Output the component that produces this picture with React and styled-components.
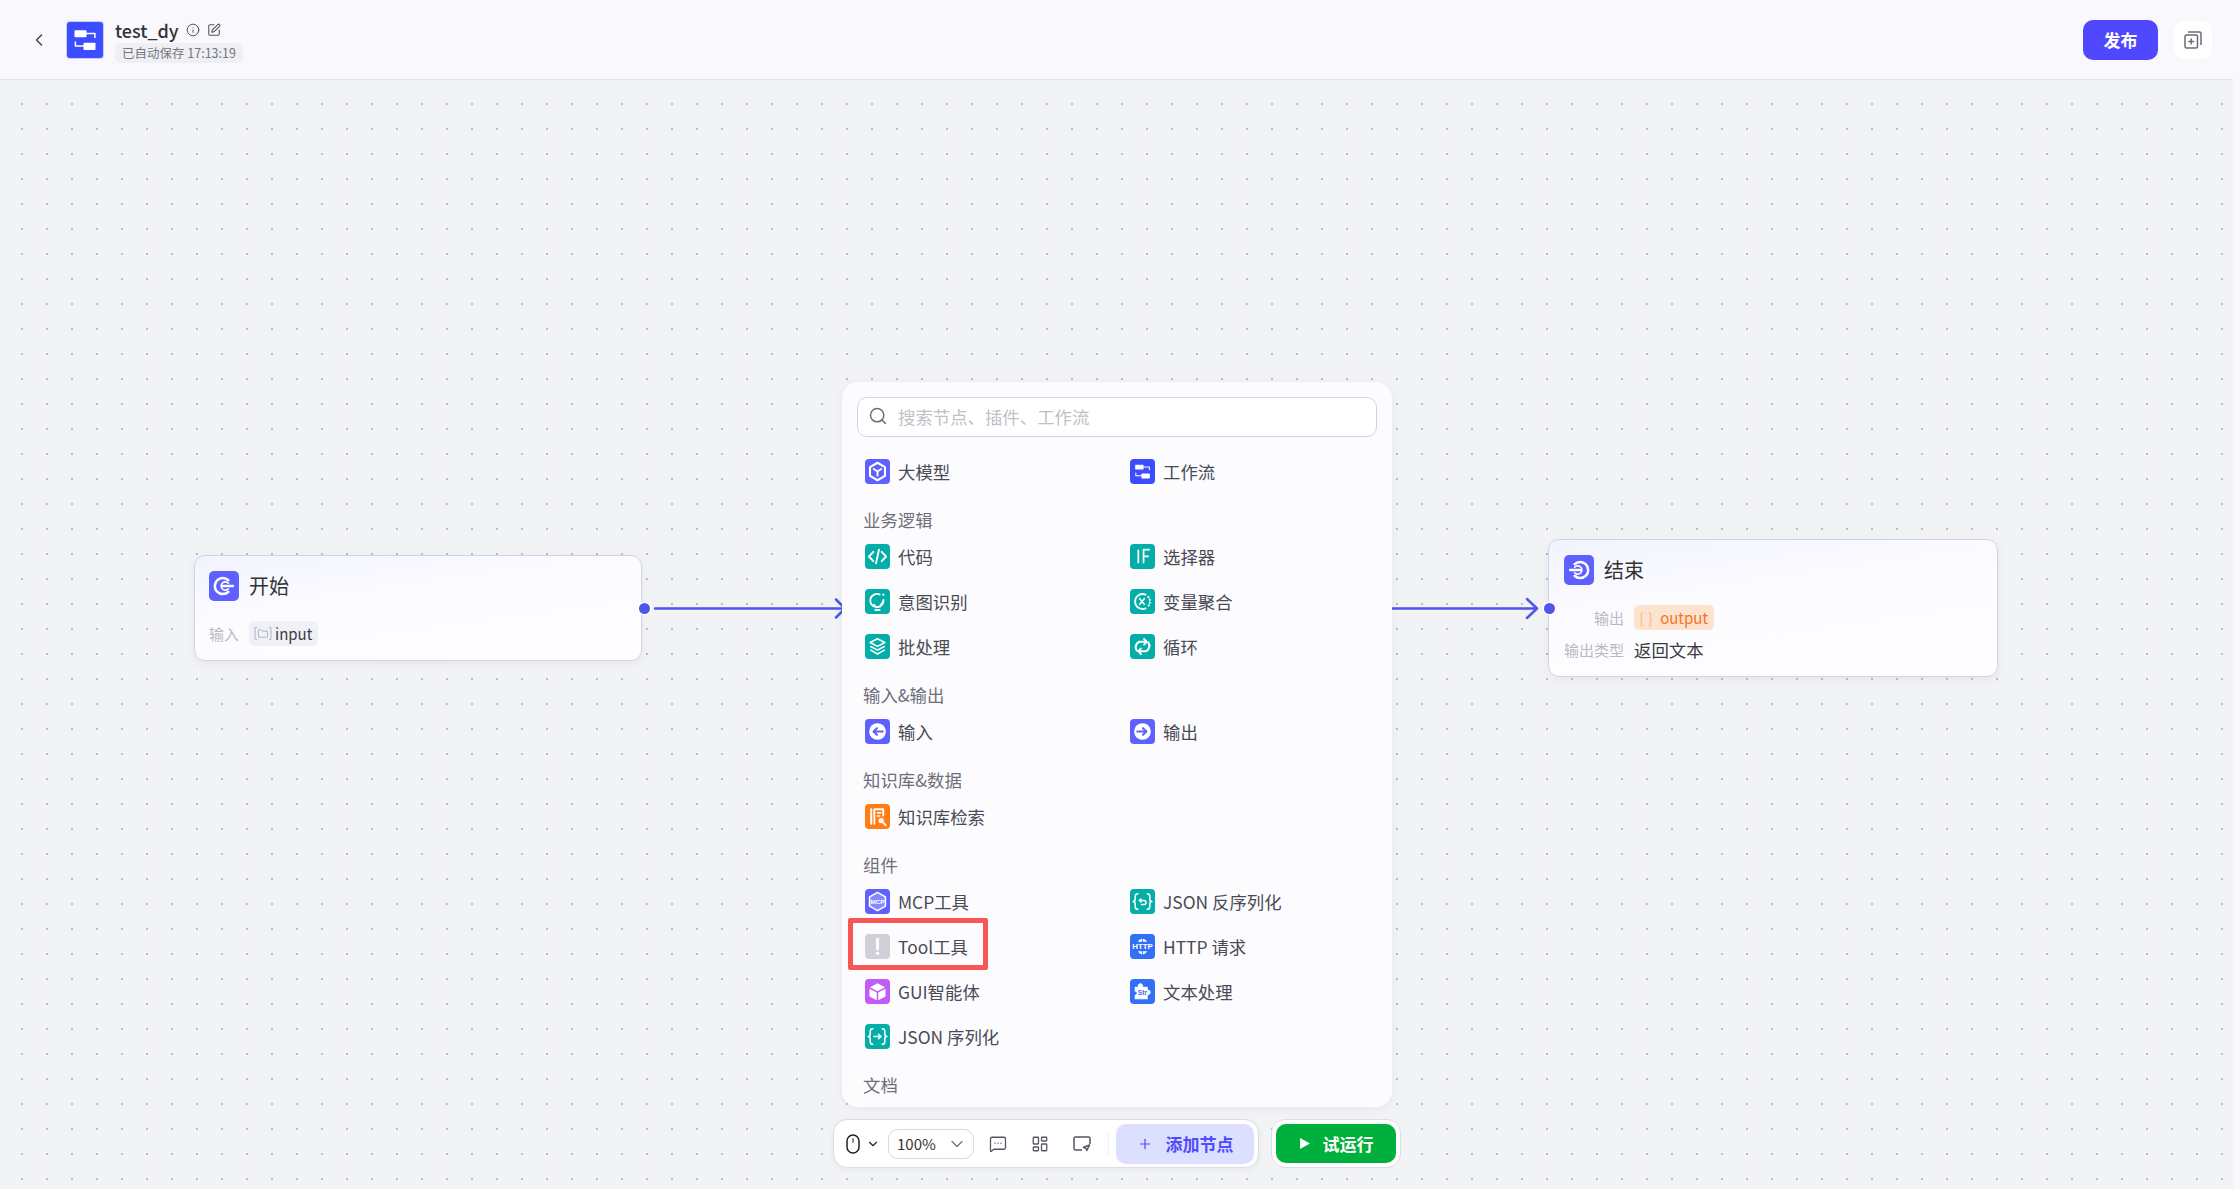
import React from 'react';
import styled, { createGlobalStyle } from 'styled-components';
import { ChevronLeft, ChevronDown, Info, SquarePen, Search, Plus, LayoutDashboard, MessageSquareMore } from 'lucide-react';

const GlobalStyle = createGlobalStyle`
    html, body {
        margin: 0;
        padding: 0;
        background: #f8f8fe;
        font-family: "Noto Sans CJK SC", "Noto Sans", sans-serif;
        color: #333;
    }
    * {
        box-sizing: border-box;
    }
`;

const Page = styled.div`
    display: flex;
    width: 2240px;
    height: 1189px;
    overflow: hidden;
`;

const Main = styled.div`
    display: flex;
    flex-direction: column;
    width: 2233px;
    height: 100%;
`;

const Header = styled.header`
    display: flex;
    align-items: center;
    flex: none;
    height: 80px;
    padding: 0 21px 0 29px;
    background: #f8f8fd;
    border-bottom: 1px solid #e3e3ec;
`;

const BackButton = styled.div`
    display: flex;
    align-items: center;
    justify-content: center;
    width: 20px;
    margin-right: 18px;
    color: #444;
`;

const LogoTile = styled.div`
    display: flex;
    width: 36px;
    height: 36px;
    margin-right: 12px;
    border-radius: 3px;
    background: #3c4dff;
    box-shadow: 0 0 0 1px #c9cdfb;
`;

const TitleBlock = styled.div`
    display: flex;
    flex-direction: column;
    gap: 1px;
    padding-top: 1px;
`;

const TitleRow = styled.div`
    display: flex;
    align-items: center;
    gap: 7px;
    height: 24px;
    color: #555;
`;

const FlowName = styled.span`
    font-size: 18px;
    font-weight: 500;
    line-height: 24px;
    color: #333;
`;

const SavedTag = styled.span`
    padding: 0 7px;
    height: 20px;
    font-size: 12.5px;
    line-height: 20px;
    color: #777;
    background: #efeff6;
    border-radius: 6px;
`;

const HeaderActions = styled.div`
    display: flex;
    align-items: center;
    gap: 16px;
    margin-left: auto;
`;

const PublishButton = styled.div`
    width: 75px;
    height: 40px;
    font-size: 17px;
    font-weight: 700;
    line-height: 40px;
    text-align: center;
    color: #fff;
    background: #4f48ff;
    border-radius: 10px;
`;

const SquareButton = styled.div`
    display: flex;
    align-items: center;
    justify-content: center;
    width: 38px;
    height: 38px;
    background: #fff;
    border-radius: 10px;
`;

const Canvas = styled.main`
    position: relative;
    flex: 1;
    overflow: hidden;
    background-color: #f2f3f5;
    background-image: radial-gradient(circle at 1px 1px, #a9aab0 0.6px, transparent 1px);
    background-size: 25px 25px;
    background-position: 21px 23px;
`;

const Edges = styled.svg`
    position: absolute;
    left: 0;
    top: 0;
    width: 2233px;
    height: 1109px;
`;

const FlowNode = styled.section`
    position: absolute;
    left: ${(p) => p.$left}px;
    top: ${(p) => p.$top}px;
    width: ${(p) => p.$width}px;
    padding: 15px ${(p) => p.$inset}px 14px;
    background: linear-gradient(172deg, #f3f3ff 0%, #fcfcff 45%, #fefdff 100%);
    border: 1px solid #d3d3e6;
    border-radius: 11px;
    box-shadow: 0 3px 10px rgba(40, 40, 80, 0.06);
`;

const NodeHeader = styled.div`
    display: flex;
    align-items: center;
    gap: 10px;
    height: 30px;
    margin-bottom: 20px;
`;

const NodeTitle = styled.span`
    font-size: 20px;
    line-height: 30px;
    color: #333;
`;

const FieldRow = styled.div`
    display: flex;
    align-items: center;
    gap: 10px;
    min-height: 25px;
    margin-top: ${(p) => p.$gap || 0}px;
`;

const FieldLabel = styled.span`
    flex: none;
    width: ${(p) => p.$width}px;
    font-size: 15px;
    line-height: 24px;
    text-align: right;
    color: #b9b9c6;
`;

const FieldValue = styled.span`
    font-size: 17.4px;
    line-height: 24px;
    color: #3a3a42;
`;

const VarChip = styled.span`
    display: flex;
    align-items: center;
    gap: 3px;
    height: 25px;
    padding: 0 6px 0 5px;
    font-size: 15px;
    color: ${(p) => (p.$accent ? '#ff6f1e' : '#3a3a42')};
    background: ${(p) => (p.$accent ? '#fbe3d0' : '#f0f1f7')};
    border-radius: 5px;
`;

const Braces = styled.span`
    font-size: 15px;
    letter-spacing: 4px;
    color: #fcbb85;
`;

const Handle = styled.span`
    position: absolute;
    left: ${(p) => p.$left}px;
    top: ${(p) => p.$top}px;
    width: 11px;
    height: 11px;
    background: #4f56e8;
    border-radius: 50%;
    box-shadow: 0 0 0 1.5px #fff;
`;

const Panel = styled.div`
    position: absolute;
    left: 842px;
    top: 302px;
    width: 550px;
    height: 725px;
    padding: 15px 15px 0;
    overflow: hidden;
    background: #fcfcff;
    border-radius: 16px;
    box-shadow: 0 2px 10px rgba(40, 40, 80, 0.05);
`;

const SearchBox = styled.div`
    display: flex;
    align-items: center;
    gap: 10px;
    height: 40px;
    margin-bottom: 12px;
    padding: 0 10px 2px;
    font-size: 17.4px;
    color: #c0c0cb;
    background: #fff;
    border: 1px solid #d2d3e2;
    border-radius: 10px;
`;

const SectionTitle = styled.div`
    height: 40px;
    padding: 12px 0 0 6px;
    font-size: 17.4px;
    line-height: 28px;
    color: #6e6e7a;
`;

const ItemGrid = styled.div`
    display: grid;
    grid-template-columns: 265px 265px;
    padding-left: 6px;
`;

const Item = styled.div`
    position: relative;
    display: flex;
    align-items: center;
    gap: 8px;
    height: 45px;
    padding-left: 2px;
    font-size: 17.4px;
    color: #4a4a54;
`;

const Callout = styled.span`
    position: absolute;
    left: -15px;
    top: -6px;
    width: 140px;
    height: 52px;
    border: 5px solid #f85555;
    border-radius: 2px;
`;

const Tile = styled.span`
    display: flex;
    flex: none;
    width: ${(p) => p.$size || 25}px;
    height: ${(p) => p.$size || 25}px;
    background: ${(p) => p.$color};
    border-radius: ${(p) => (p.$size ? 5 : 4)}px;
`;

const Dock = styled.div`
    position: absolute;
    left: 833px;
    bottom: 21px;
    display: flex;
    gap: 12px;
`;

const Toolbar = styled.div`
    display: flex;
    align-items: center;
    width: 426px;
    height: 49px;
    padding-left: 12px;
    background: #fff;
    border: 1px solid #dcdce8;
    border-radius: 14px;
    box-shadow: 0 2px 6px rgba(40, 40, 80, 0.05);
`;

const MouseGroup = styled.div`
    display: flex;
    align-items: center;
    gap: 6px;
    width: 42px;
    color: #222;
`;

const ZoomSelect = styled.div`
    display: flex;
    align-items: center;
    justify-content: space-between;
    width: 86px;
    height: 30px;
    padding: 0 6px 0 8px;
    font-size: 15px;
    color: #333;
    border: 1px solid #d8d8e6;
    border-radius: 10px;
`;

const ToolIcon = styled.div`
    display: flex;
    align-items: center;
    justify-content: center;
    width: 42px;
    height: 30px;
    margin-left: ${(p) => p.$offset || 0}px;
    color: #555560;
`;

const Divider = styled.span`
    width: 1px;
    height: 22px;
    margin: 0 7px 0 5px;
    background: #f1f1f5;
`;

const AddButton = styled.div`
    display: flex;
    align-items: center;
    justify-content: center;
    gap: 13px;
    width: 138px;
    height: 40px;
    font-size: 17px;
    font-weight: 700;
    color: #4f4bff;
    background: #dcdffe;
    border-radius: 10px;
`;

const RunBar = styled.div`
    width: 130px;
    height: 49px;
    padding: 4px;
    background: #fff;
    border: 1px solid #dcdce8;
    border-radius: 14px;
`;

const RunButton = styled.div`
    display: flex;
    align-items: center;
    justify-content: center;
    gap: 12px;
    width: 120px;
    height: 39px;
    font-size: 17px;
    font-weight: 700;
    color: #fff;
    background: #00b03c;
    border-radius: 10px;
`;

const ScrollEdge = styled.div`
    flex: none;
    width: 7px;
    background: #f8f8fe;
`;

const Glyph = ({ children }) => (
    <svg viewBox="0 0 24 24" width="100%" height="100%" fill="none" stroke="#fff" strokeWidth="1.8" strokeLinecap="round" strokeLinejoin="round">
        {children}
    </svg>
);

const TileText = ({ size, children, fill = '#fff', y = 15.5 }) => (
    <text x="12" y={y} textAnchor="middle" fontSize={size} fontWeight="700" fontFamily="Liberation Sans, sans-serif" fill={fill} stroke="none">
        {children}
    </text>
);

const flowGlyph = (
    <Glyph>
        <g strokeWidth="1">
            <rect x="5.5" y="6" width="7" height="3.6" fill="#fff" />
            <path d="M12.5 7.6H18.6V10.4" />
            <rect x="11.5" y="14.4" width="7" height="3.8" fill="#fff" />
            <path d="M11.5 16H5.6V13.4" />
        </g>
    </Glyph>
);

const icons = {
    model: (
        <Glyph>
            <path d="M12 3.6l7.2 4.2v8.4L12 20.4l-7.2-4.2V7.8z" strokeWidth="2" />
            <path d="M8.4 9.6L12 12l3.6-2.4M12 12v4" />
        </Glyph>
    ),
    code: (
        <Glyph>
            <path d="M8 7.5L3.8 12 8 16.5M16 7.5l4.2 4.5-4.2 4.5M13.4 5.5l-2.8 13" />
        </Glyph>
    ),
    ifElse: (
        <Glyph>
            <path d="M8 5.5v13M13 18.5v-13h6M13 11.8h5" strokeWidth="1.7" strokeLinecap="butt" />
        </Glyph>
    ),
    intent: (
        <Glyph>
            <path d="M14 5.2a6.4 6.4 0 1 0 3.8 5.2c-.1 2.4-1.6 3.6-2.6 4.8-.6.7-.7 1.3-.8 2H9.8c-.1-.7-.3-1.3-.9-2" />
            <path d="M10 20.2h4" />
            <circle cx="17.6" cy="5.4" r="1" fill="#fff" stroke="none" />
        </Glyph>
    ),
    aggregate: (
        <Glyph>
            <path d="M15 5.4A7.2 7.2 0 1 0 15 18.6" />
            <path d="M17.5 7.5a7 7 0 0 1 0 9" strokeDasharray="0.6 2.2" />
            <path d="M9.3 9.3l4.4 5.4M13.7 9.3l-4.4 5.4" strokeWidth="1.5" />
        </Glyph>
    ),
    batch: (
        <Glyph>
            <path d="M12 4.5l7 3.7-7 3.7-7-3.7z" strokeWidth="1.5" />
            <path d="M5.5 12l6.5 3.5 6.5-3.5M5.5 15.5l6.5 3.7 6.5-3.7" strokeWidth="1.5" />
        </Glyph>
    ),
    loop: (
        <Glyph>
            <path d="M6.5 16a5.5 5.5 0 0 1 2.5-8.5h6.5" strokeWidth="2" />
            <path d="M13.5 4.8l2.6 2.7-2.6 2.7" />
            <path d="M17.5 8a5.5 5.5 0 0 1-2.5 8.5H8.5" strokeWidth="2" />
            <path d="M10.5 13.8l-2.6 2.7 2.6 2.7" />
        </Glyph>
    ),
    input: (
        <Glyph>
            <circle cx="12" cy="12" r="8" fill="#fff" stroke="none" />
            <path d="M17 12H8.5M11.5 8.8L8.2 12l3.3 3.2" stroke="#5f61ff" strokeWidth="2" />
        </Glyph>
    ),
    output: (
        <Glyph>
            <circle cx="12" cy="12" r="8" fill="#fff" stroke="none" />
            <path d="M7 12h8.5M12.5 8.8l3.3 3.2-3.3 3.2" stroke="#5f61ff" strokeWidth="2" />
        </Glyph>
    ),
    start: (
        <Glyph>
            <path d="M15.5 7.4A6.4 6.4 0 1 0 15.5 16.6" strokeWidth="2" />
            <path d="M15.5 9.8A3.3 3.3 0 1 0 15.5 14.2" strokeWidth="1.3" />
            <path d="M11 12h8" strokeWidth="2" />
        </Glyph>
    ),
    end: (
        <Glyph>
            <path d="M8.5 7.4A6.4 6.4 0 1 1 8.5 16.6" strokeWidth="2" />
            <path d="M8.5 9.8A3.3 3.3 0 1 1 8.5 14.2" strokeWidth="1.3" />
            <path d="M5 12h8" strokeWidth="2" />
        </Glyph>
    ),
    knowledge: (
        <Glyph>
            <path d="M6 5v14" strokeWidth="2" />
            <path d="M9 19V5h8.5v6" />
            <path d="M12 8.5h3M12 11.5h2" strokeWidth="1.5" />
            <circle cx="15.5" cy="16" r="3" fill="#fff" stroke="#ff7d14" strokeWidth="1" />
            <path d="M18 18.5l2 2" />
        </Glyph>
    ),
    mcp: (
        <Glyph>
            <path d="M12 3.2l7.6 4.4v8.8L12 20.8l-7.6-4.4V7.6z" fill="rgba(255,255,255,0.25)" strokeWidth="1.5" />
            <TileText size="6" y="14">MCP</TileText>
        </Glyph>
    ),
    jsonIn: (
        <Glyph>
            <path d="M7.5 4.5c-2 0-2.5 1-2.5 2.5v2.5c0 1.5-.8 2.5-2 2.5 1.2 0 2 1 2 2.5V17c0 1.5.5 2.5 2.5 2.5M16.5 4.5c2 0 2.5 1 2.5 2.5v2.5c0 1.5.8 2.5 2 2.5-1.2 0-2 1-2 2.5V17c0 1.5-.5 2.5-2.5 2.5" strokeWidth="1.5" />
            <path d="M10.5 9.5L9 11l1.5 1.5M9 11h4.5a1.7 1.7 0 0 1 0 3.8H11" strokeWidth="1.4" />
        </Glyph>
    ),
    jsonOut: (
        <Glyph>
            <path d="M7.5 4.5c-2 0-2.5 1-2.5 2.5v2.5c0 1.5-.8 2.5-2 2.5 1.2 0 2 1 2 2.5V17c0 1.5.5 2.5 2.5 2.5M16.5 4.5c2 0 2.5 1 2.5 2.5v2.5c0 1.5.8 2.5 2 2.5-1.2 0-2 1-2 2.5V17c0 1.5-.5 2.5-2.5 2.5" strokeWidth="1.5" />
            <path d="M8.5 12h7M13 9.8l2.5 2.2-2.5 2.2" strokeWidth="1.4" />
        </Glyph>
    ),
    tool: (
        <Glyph>
            <path d="M12 5v9" strokeWidth="3" />
            <circle cx="12" cy="18.5" r="1.7" fill="#fff" stroke="none" />
        </Glyph>
    ),
    http: (
        <Glyph>
            <path d="M7.5 7.5c1.2-2 2.8-3 4.5-3s3.3 1 4.5 3zM7.5 16.5c1.2 2 2.8 3 4.5 3s3.3-1 4.5-3z" fill="#fff" stroke="none" />
            <path d="M12 4.5v3M12 16.5v3" stroke="#3370f5" strokeWidth="0.8" />
            <TileText size="7.6" y="14.8">HTTP</TileText>
        </Glyph>
    ),
    gui: (
        <Glyph>
            <path d="M12 4l7.2 3.8L12 11.7 4.8 7.8z" fill="#fff" stroke="none" />
            <path d="M4.3 9.3l7 3.7v7.5l-7-3.8zM19.7 9.3l-7 3.7v7.5l7-3.8z" fill="#fff" stroke="none" />
        </Glyph>
    ),
    text: (
        <Glyph>
            <path d="M5 8h3.5a2 2 0 1 1 3.5-1.5V8h4.5v3a2 2 0 1 1 0 3.6V19H5v-3.5a2 2 0 0 0 0-4z" fill="#fff" stroke="#fff" strokeWidth="1" />
            <TileText size="6.5" y="15.5" fill="#3370f5">Str</TileText>
        </Glyph>
    ),
    flow: flowGlyph
};

const tealTile = '#03ada8';
const indigoTile = '#5f61ff';
const blueTile = '#3370f5';

const sections = [
    {
        items: [
            { name: '大模型', icon: 'model', color: indigoTile },
            { name: '工作流', icon: 'flow', color: '#3c4dff' }
        ]
    },
    {
        title: '业务逻辑',
        items: [
            { name: '代码', icon: 'code', color: tealTile },
            { name: '选择器', icon: 'ifElse', color: tealTile },
            { name: '意图识别', icon: 'intent', color: tealTile },
            { name: '变量聚合', icon: 'aggregate', color: tealTile },
            { name: '批处理', icon: 'batch', color: tealTile },
            { name: '循环', icon: 'loop', color: tealTile }
        ]
    },
    {
        title: '输入&输出',
        items: [
            { name: '输入', icon: 'input', color: indigoTile },
            { name: '输出', icon: 'output', color: indigoTile }
        ]
    },
    {
        title: '知识库&数据',
        items: [{ name: '知识库检索', icon: 'knowledge', color: '#ff7d14' }]
    },
    {
        title: '组件',
        items: [
            { name: 'MCP工具', icon: 'mcp', color: indigoTile },
            { name: 'JSON 反序列化', icon: 'jsonIn', color: tealTile },
            { name: 'Tool工具', icon: 'tool', color: '#cfd0d8', marked: true },
            { name: 'HTTP 请求', icon: 'http', color: blueTile },
            { name: 'GUI智能体', icon: 'gui', color: '#c35cf6' },
            { name: '文本处理', icon: 'text', color: blueTile },
            { name: 'JSON 序列化', icon: 'jsonOut', color: tealTile }
        ]
    },
    { title: '文档', items: [] }
];

const App = () => {
    return (
        <Page>
            <GlobalStyle />
            <Main>
                <Header>
                    <BackButton><ChevronLeft size={20} strokeWidth={1.8} /></BackButton>
                    <LogoTile>{flowGlyph}</LogoTile>
                    <TitleBlock>
                        <TitleRow>
                            <FlowName>test_dy</FlowName>
                            <Info size={14} strokeWidth={1.7} />
                            <SquarePen size={14} strokeWidth={1.8} />
                        </TitleRow>
                        <SavedTag>已自动保存 17:13:19</SavedTag>
                    </TitleBlock>
                    <HeaderActions>
                        <PublishButton>发布</PublishButton>
                        <SquareButton>
                            <svg width="18" height="18" viewBox="0 0 18 18" fill="none" stroke="#6b6b75" strokeWidth="1.5">
                                <rect x="1" y="4" width="12.5" height="13" rx="1.5" />
                                <path d="M4 1h11.5a1.5 1.5 0 0 1 1.5 1.5V14" />
                                <path d="M7.2 7.5v6M4.2 10.5h6" />
                            </svg>
                        </SquareButton>
                    </HeaderActions>
                </Header>
                <Canvas>
                    <Edges fill="none" stroke="#4f56e8" strokeWidth="2.5" strokeLinecap="round" strokeLinejoin="round">
                        <path d="M655 528.5H845M836 519.5L845 528.5L836 537.5" />
                        <path d="M1392 528.5H1537M1527 519L1537 528.5L1527 538" />
                    </Edges>
                    <FlowNode $left={194} $top={475} $width={448} $inset={14}>
                        <NodeHeader>
                            <Tile $size={30} $color={indigoTile}>{icons.start}</Tile>
                            <NodeTitle>开始</NodeTitle>
                        </NodeHeader>
                        <FieldRow>
                            <FieldLabel $width={30}>输入</FieldLabel>
                            <VarChip>
                                <svg width="18" height="15" viewBox="0 0 18 15" fill="none" stroke="#b5b6c2" strokeWidth="1">
                                    <path d="M3 1.5H1v12h2M15 1.5h2v12h-2" />
                                    <path d="M4.5 4h3l1 1.2h5v6h-9z" />
                                </svg>
                                input
                            </VarChip>
                        </FieldRow>
                        <Handle $left={444} $top={47} />
                    </FlowNode>
                    <FlowNode $left={1548} $top={459} $width={450} $inset={15}>
                        <NodeHeader>
                            <Tile $size={30} $color={indigoTile}>{icons.end}</Tile>
                            <NodeTitle>结束</NodeTitle>
                        </NodeHeader>
                        <FieldRow>
                            <FieldLabel $width={60}>输出</FieldLabel>
                            <VarChip $accent><Braces>{'{}'}</Braces>output</VarChip>
                        </FieldRow>
                        <FieldRow $gap={7}>
                            <FieldLabel $width={60}>输出类型</FieldLabel>
                            <FieldValue>返回文本</FieldValue>
                        </FieldRow>
                        <Handle $left={-5} $top={63} />
                    </FlowNode>
                    <Panel>
                        <SearchBox>
                            <Search size={20} color="#6e6e7a" strokeWidth={1.8} />
                            搜索节点、插件、工作流
                        </SearchBox>
                        {sections.map((section, i) => (
                            <div key={i}>
                                {section.title && <SectionTitle>{section.title}</SectionTitle>}
                                <ItemGrid>
                                    {section.items.map((item) => (
                                        <Item key={item.name}>
                                            <Tile $color={item.color}>{icons[item.icon]}</Tile>
                                            {item.name}
                                            {item.marked && <Callout />}
                                        </Item>
                                    ))}
                                </ItemGrid>
                            </div>
                        ))}
                    </Panel>
                    <Dock>
                        <Toolbar>
                            <MouseGroup>
                                <svg width="14" height="20" viewBox="0 0 14 20" fill="none" stroke="#1f1f24" strokeWidth="1.5" style={{ flex: 'none' }}>
                                    <rect x="1" y="1" width="12" height="18" rx="6" />
                                    <rect x="6" y="4" width="2" height="5" rx="1" fill="#8a8a92" stroke="none" />
                                </svg>
                                <ChevronDown size={14} strokeWidth={2} style={{ flex: 'none' }} />
                            </MouseGroup>
                            <ZoomSelect>
                                100%
                                <ChevronDown size={20} color="#77777f" strokeWidth={1.6} />
                            </ZoomSelect>
                            <ToolIcon $offset={3}><MessageSquareMore size={18} strokeWidth={1.7} /></ToolIcon>
                            <ToolIcon><LayoutDashboard size={18} strokeWidth={1.7} /></ToolIcon>
                            <ToolIcon>
                                <svg width="18" height="16" viewBox="0 0 18 16" fill="none" stroke="currentColor" strokeWidth="1.5" strokeLinejoin="round">
                                    <path d="M9 14H2.5A1.5 1.5 0 0 1 1 12.5v-10A1.5 1.5 0 0 1 2.5 1h13A1.5 1.5 0 0 1 17 2.5V8" />
                                    <path d="M16.5 9l-6 2.2 2.3 1 1 2.3z" />
                                </svg>
                            </ToolIcon>
                            <Divider />
                            <AddButton>
                                <Plus size={16} strokeWidth={1.8} />
                                添加节点
                            </AddButton>
                        </Toolbar>
                        <RunBar>
                            <RunButton>
                                <svg width="12" height="13" viewBox="0 0 12 13"><path d="M1 1l10 5.5L1 12z" fill="#fff" /></svg>
                                试运行
                            </RunButton>
                        </RunBar>
                    </Dock>
                </Canvas>
            </Main>
            <ScrollEdge />
        </Page>
    );
};

export default App;
